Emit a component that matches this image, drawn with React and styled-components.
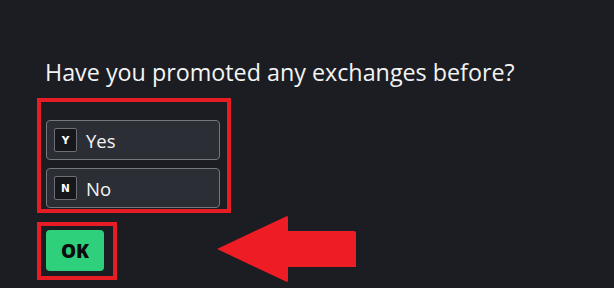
import React from "react";
import styled, { createGlobalStyle } from "styled-components";

const GlobalStyle = createGlobalStyle`
  html, body {
    margin: 0;
    padding: 0;
    background: #1b1d23;
  }
`;

const Page = styled.div`
  width: 614px;
  height: 288px;
  background: #1b1d23;
  box-sizing: border-box;
  padding: 56px 0 0 37px;
  font-family: "Open Sans", "DejaVu Sans", sans-serif;
  color: #f2f2f2;
  overflow: hidden;
`;

const Question = styled.h2`
  margin: 0 0 10px 8px;
  font-size: 23.3px;
  font-weight: 400;
  line-height: 32px;
  color: #f4f4f4;
`;

// red marker frame drawn round a part of the form
const Highlight = styled.div`
  display: inline-flex;
  flex-direction: column;
  gap: 8px;
  border: 4px solid #e81c24;
  padding: ${({ pad }) => pad};
`;

const Option = styled.div`
  display: flex;
  align-items: center;
  gap: 9px;
  width: 174px;
  height: 40px;
  box-sizing: border-box;
  padding: 0 7px;
  border: 1px solid #74777c;
  border-radius: 4px;
  background: #2c2e35;
  font-size: 18.5px;
  color: #f4f4f4;
`;

const Key = styled.span`
  display: flex;
  align-items: center;
  justify-content: center;
  width: 23px;
  height: 24px;
  box-sizing: border-box;
  border: 1px solid #6c6f75;
  border-radius: 2px;
  background: #15171b;
  font-family: "DejaVu Sans", sans-serif;
  font-size: 10.5px;
  font-weight: 700;
  color: #ffffff;
`;

const Footer = styled.div`
  display: flex;
  align-items: center;
  margin-top: 2px;
`;

const OkButton = styled.button`
  width: 58px;
  height: 41px;
  border: none;
  border-radius: 4px;
  background: #2fd07b;
  font-family: "Open Sans", sans-serif;
  font-size: 19px;
  font-weight: 800;
  color: #0b0c0e;
  padding: 0;
`;

const ArrowSvg = styled.svg`
  margin-left: 100px;
  flex-shrink: 0;
`;

const Arrow = () => (
  <ArrowSvg width="142" height="72" viewBox="0 0 142 72">
    <path
      d="M0 34 L70 1 Q71 1 71 3 L71 16 L137 16 Q139 16 139 18 L139 52 L71 52 L71 65 Q71 67 70 67 Z"
      fill="#ee1c25"
    />
  </ArrowSvg>
);

export default function App() {
  return (
    <>
      <GlobalStyle />
      <Page>
        <Question>Have you promoted any exchanges before?</Question>
        <Highlight pad="18px 7px 1px 5px">
          <Option>
            <Key>Y</Key>
            Yes
          </Option>
          <Option>
            <Key>N</Key>
            No
          </Option>
        </Highlight>
        <Footer>
          <Highlight pad="4px 9px 5px 5px">
            <OkButton>OK</OkButton>
          </Highlight>
          <Arrow />
        </Footer>
      </Page>
    </>
  );
}
